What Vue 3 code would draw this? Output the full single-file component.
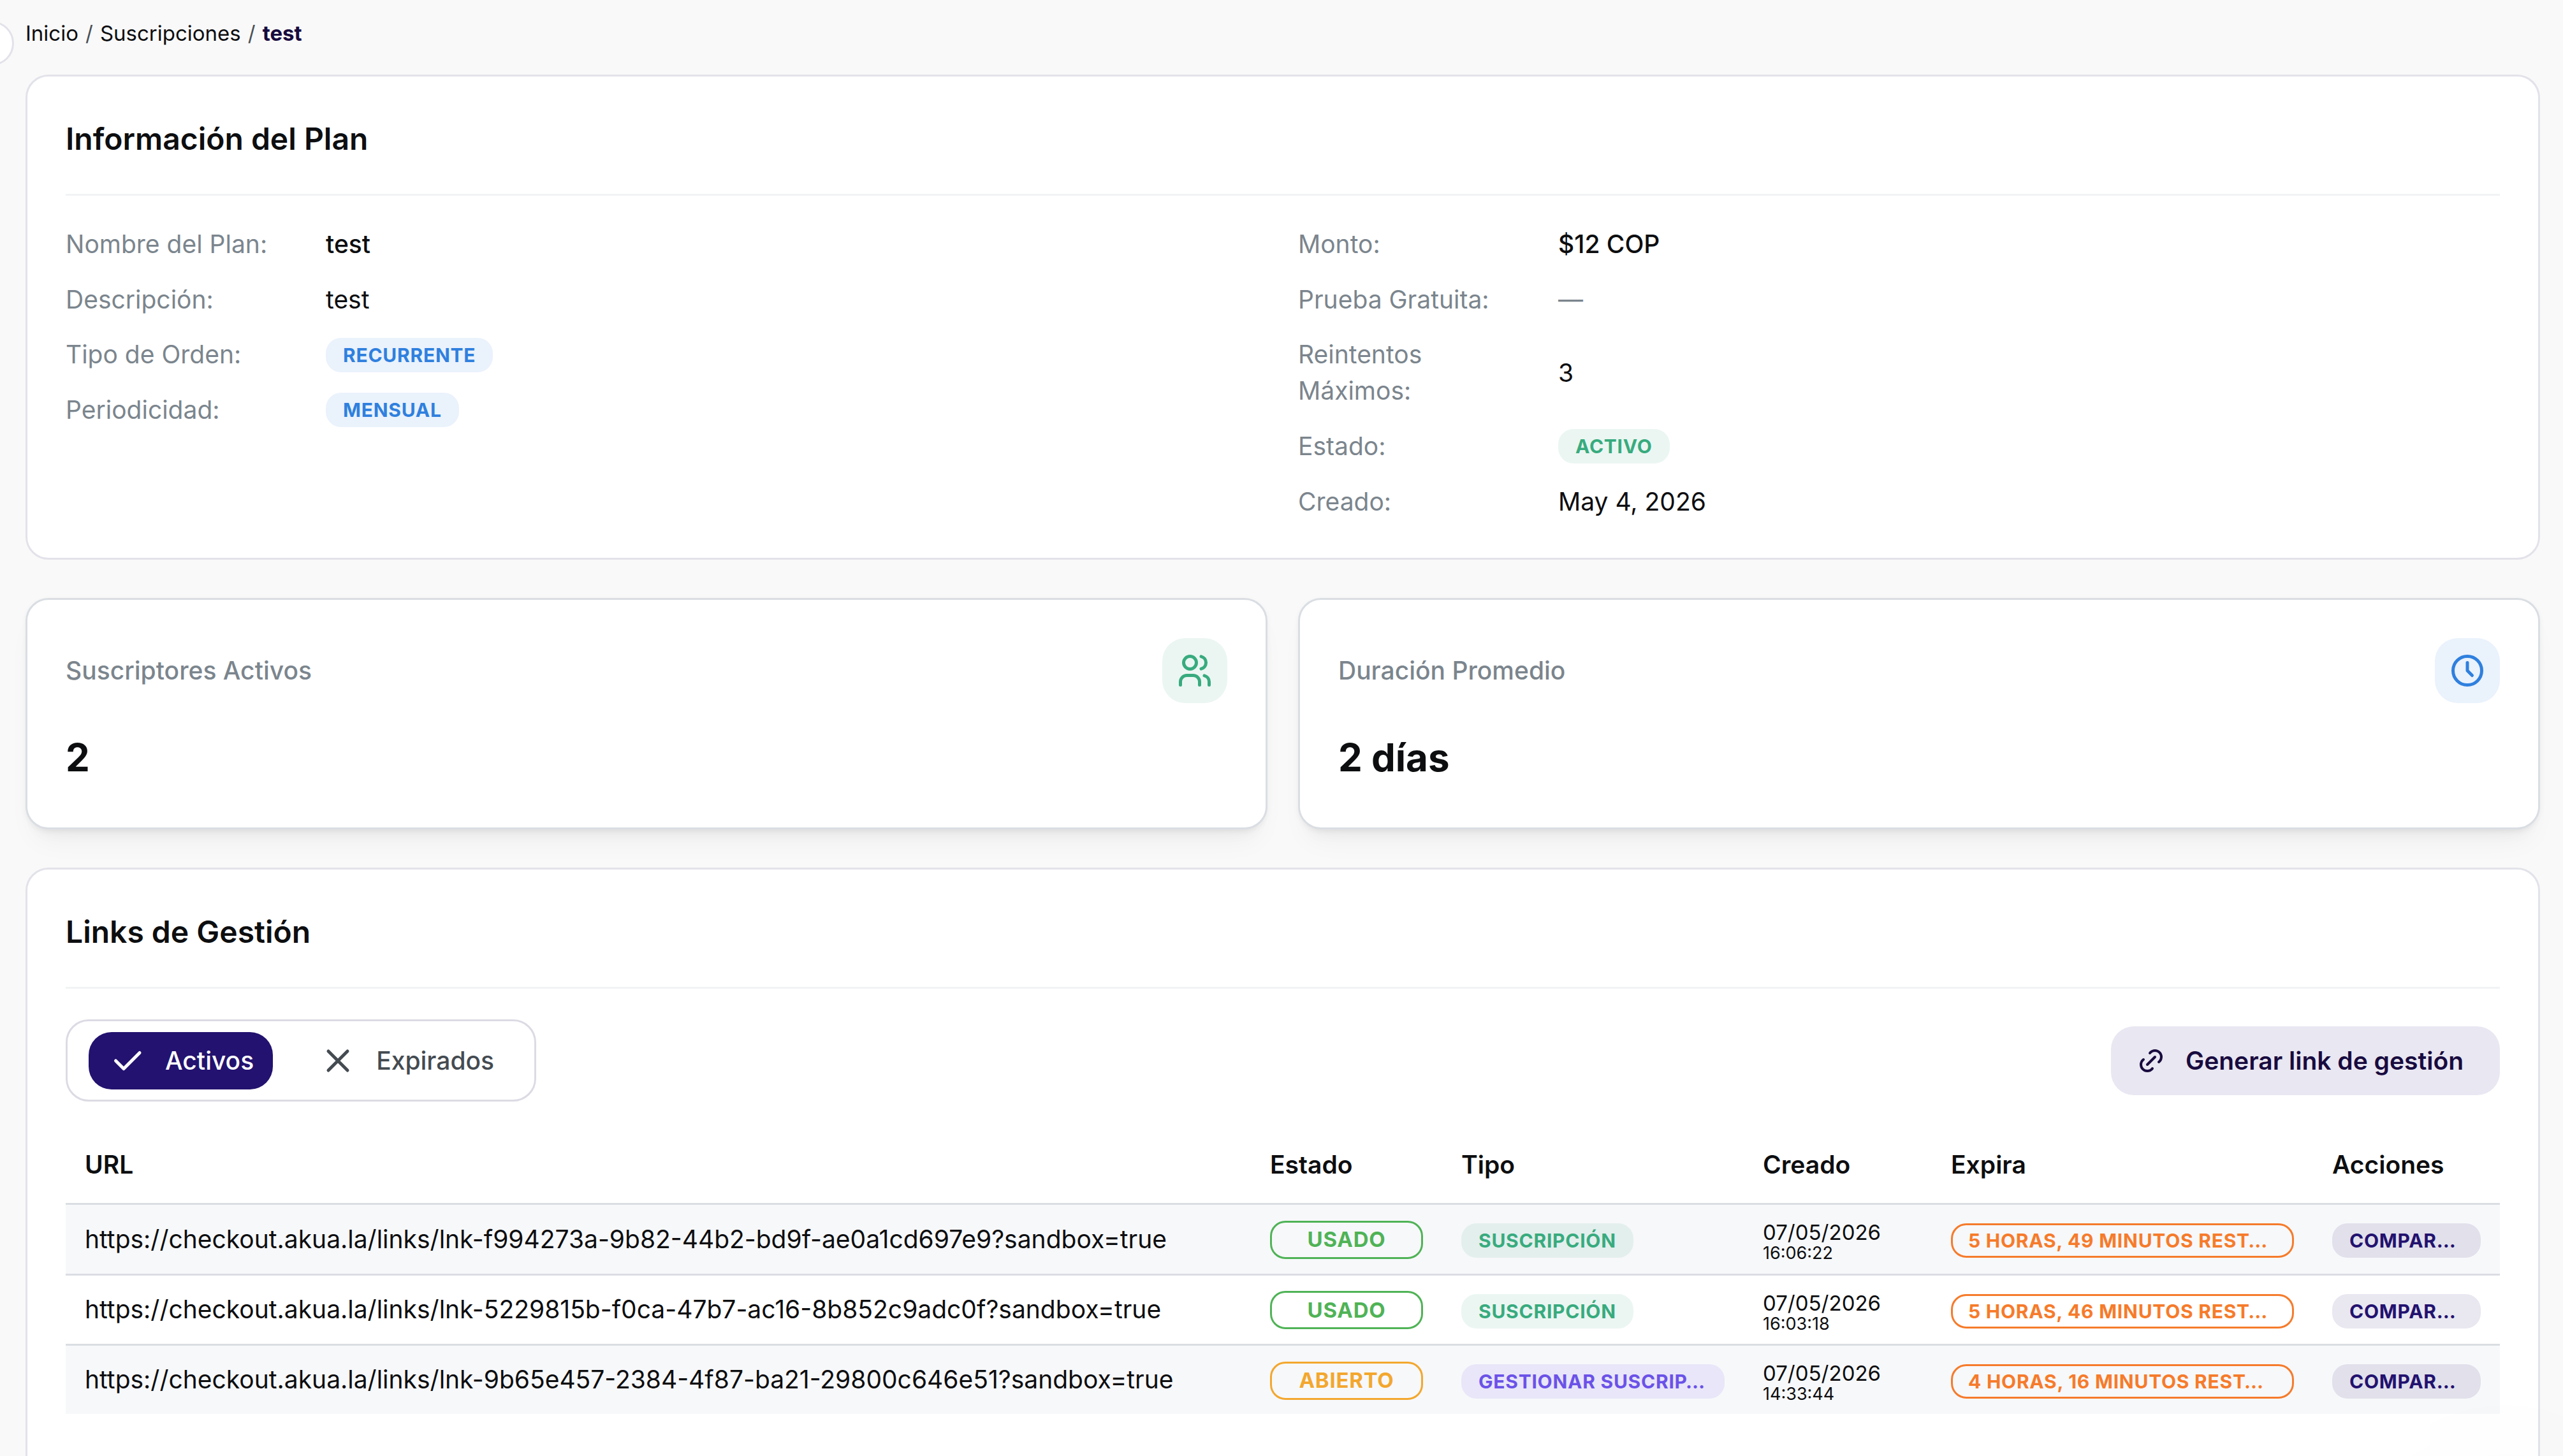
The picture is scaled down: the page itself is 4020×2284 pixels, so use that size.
<template>
  <div class="page">
    <div class="sidebar-toggle"></div>

    <nav class="breadcrumbs">
      <a class="crumb">Inicio</a>
      <span class="separator">/</span>
      <a class="crumb">Suscripciones</a>
      <span class="separator">/</span>
      <span class="crumb current">test</span>
    </nav>

    <!-- Información del plan -->
    <section class="card">
      <header class="card-header">
        <h2 class="card-title">Información del Plan</h2>
      </header>
      <div class="plan-grid">
        <div v-for="(column, i) in planColumns" :key="i" class="plan-column">
          <div v-for="row in column" :key="row.label" class="plan-row">
            <span class="plan-label">{{ row.label }}</span>
            <span v-if="row.badge" class="badge" :class="row.badge">{{ row.value }}</span>
            <span v-else class="plan-value" :class="row.style">{{ row.value }}</span>
          </div>
        </div>
      </div>
    </section>

    <!-- Métricas -->
    <div class="stats">
      <div v-for="stat in stats" :key="stat.label" class="stat-card">
        <div class="stat-top">
          <span class="stat-label">{{ stat.label }}</span>
          <span class="stat-icon" :class="stat.color">
            <svg viewBox="0 0 24 24" class="icon">
              <path v-for="d in stat.paths" :key="d" :d="d" />
            </svg>
          </span>
        </div>
        <div class="stat-value">{{ stat.value }}</div>
      </div>
    </div>

    <!-- Links de gestión -->
    <section class="card links-card">
      <header class="card-header">
        <h2 class="card-title">Links de Gestión</h2>
      </header>

      <div class="toolbar">
        <div class="tabs">
          <button
            v-for="tab in tabs"
            :key="tab.id"
            class="tab"
            :class="{ active: activeTab === tab.id }"
            @click="activeTab = tab.id"
          >
            <svg viewBox="0 0 24 24" class="icon">
              <path :d="tab.path" />
            </svg>
            {{ tab.label }}
          </button>
        </div>

        <button class="generate-button">
          <svg viewBox="0 0 24 24" class="icon">
            <path d="M9 15l6 -6" />
            <path d="M11 6l.463 -.536a5 5 0 0 1 7.071 7.072l-.534 .464" />
            <path d="M13 18l-.397 .534a5.068 5.068 0 0 1 -7.127 0a4.972 4.972 0 0 1 0 -7.071l.524 -.463" />
          </svg>
          Generar link de gestión
        </button>
      </div>

      <div class="table">
        <div class="table-row table-head">
          <span v-for="title in headers" :key="title" class="cell">{{ title }}</span>
        </div>
        <div v-for="link in links" :key="link.url" class="table-row table-body-row">
          <span class="cell url">{{ link.url }}</span>
          <span class="cell status-cell">
            <span class="badge outline status" :class="link.statusColor">{{ link.status }}</span>
          </span>
          <span class="cell badge-cell">
            <span class="badge" :class="link.typeColor">{{ link.type }}</span>
          </span>
          <span class="cell created">
            <span class="date">{{ link.date }}</span>
            <span class="time">{{ link.time }}</span>
          </span>
          <span class="cell badge-cell">
            <span class="badge outline orange expires">{{ link.expires }}</span>
          </span>
          <span class="cell badge-cell">
            <span class="badge indigo share">COMPAR…</span>
          </span>
        </div>
      </div>
    </section>

    <div class="floating-shadow"></div>
  </div>
</template>

<script setup>
import { ref } from 'vue'

const planColumns = [
  [
    { label: 'Nombre del Plan:', value: 'test', style: 'medium' },
    { label: 'Descripción:', value: 'test' },
    { label: 'Tipo de Orden:', value: 'RECURRENTE', badge: 'blue' },
    { label: 'Periodicidad:', value: 'MENSUAL', badge: 'blue' }
  ],
  [
    { label: 'Monto:', value: '$12 COP', style: 'medium' },
    { label: 'Prueba Gratuita:', value: '—', style: 'dimmed' },
    { label: 'Reintentos Máximos:', value: '3' },
    { label: 'Estado:', value: 'ACTIVO', badge: 'teal' },
    { label: 'Creado:', value: 'May 4, 2026' }
  ]
]

const stats = [
  {
    label: 'Suscriptores Activos',
    value: '2',
    color: 'teal',
    paths: [
      'M5 7a4 4 0 1 0 8 0a4 4 0 1 0 -8 0',
      'M3 21v-2a4 4 0 0 1 4 -4h4a4 4 0 0 1 4 4v2',
      'M16 3.13a4 4 0 0 1 0 7.75',
      'M21 21v-2a4 4 0 0 0 -3 -3.85'
    ]
  },
  {
    label: 'Duración Promedio',
    value: '2 días',
    color: 'blue',
    paths: ['M3 12a9 9 0 1 0 18 0a9 9 0 0 0 -18 0', 'M12 7v5l3 3']
  }
]

const activeTab = ref('activos')
const tabs = [
  { id: 'activos', label: 'Activos', path: 'M5 12l5 5l10 -10' },
  { id: 'expirados', label: 'Expirados', path: 'M18 6l-12 12M6 6l12 12' }
]

const headers = ['URL', 'Estado', 'Tipo', 'Creado', 'Expira', 'Acciones']

const links = [
  {
    url: 'https://checkout.akua.la/links/lnk-f994273a-9b82-44b2-bd9f-ae0a1cd697e9?sandbox=true',
    status: 'USADO',
    statusColor: 'green',
    type: 'SUSCRIPCIÓN',
    typeColor: 'teal',
    date: '07/05/2026',
    time: '16:06:22',
    expires: '5 HORAS, 49 MINUTOS REST…'
  },
  {
    url: 'https://checkout.akua.la/links/lnk-5229815b-f0ca-47b7-ac16-8b852c9adc0f?sandbox=true',
    status: 'USADO',
    statusColor: 'green',
    type: 'SUSCRIPCIÓN',
    typeColor: 'teal',
    date: '07/05/2026',
    time: '16:03:18',
    expires: '5 HORAS, 46 MINUTOS REST…'
  },
  {
    url: 'https://checkout.akua.la/links/lnk-9b65e457-2384-4f87-ba21-29800c646e51?sandbox=true',
    status: 'ABIERTO',
    statusColor: 'yellow',
    type: 'GESTIONAR SUSCRIP…',
    typeColor: 'violet',
    date: '07/05/2026',
    time: '14:33:44',
    expires: '4 HORAS, 16 MINUTOS REST…'
  }
]
</script>

<style>
body {
  background: #f9f9f9;
  overflow: hidden;
}
</style>

<style scoped>
.page {
  position: relative;
  box-sizing: border-box;
  width: 4020px;
  height: 2284px;
  padding: 0 36px 0 40px;
  overflow: hidden;
  background: #f9f9f9;
  font-family: Inter, sans-serif;
  font-size: 39px;
  line-height: 56.7px;
  color: #0d0e10;
}

.page *,
.page *::before {
  box-sizing: border-box;
}

button {
  font-family: inherit;
  border: none;
}

.icon {
  display: block;
  flex-shrink: 0;
  fill: none;
  stroke: currentColor;
  stroke-width: 2;
  stroke-linecap: round;
  stroke-linejoin: round;
}

.sidebar-toggle {
  position: absolute;
  left: -48px;
  top: 33px;
  width: 70px;
  height: 70px;
  border: 3px solid #e2e2ea;
  border-radius: 50%;
  background: #fff;
}

/* Migas de pan */
.breadcrumbs {
  display: flex;
  align-items: center;
  gap: 11px;
  height: 117px;
  padding-bottom: 13px;
  font-size: 33px;
}

.separator {
  color: #495057;
}

.current {
  font-weight: 700;
  color: #180b3f;
}

/* Tarjetas */
.card {
  padding: 60px;
  border: 3px solid #e2e2ea;
  border-radius: 36px;
  background: #fff;
}

.card-header {
  padding-bottom: 48px;
  margin-bottom: 48px;
  border-bottom: 3px solid #f1f3f5;
}

.card-title {
  margin: 0;
  font-size: 48px;
  font-weight: 600;
  line-height: 76px;
}

.plan-grid {
  display: grid;
  grid-template-columns: 1fr 1fr;
  gap: 48px;
}

.plan-column {
  display: flex;
  flex-direction: column;
  gap: 30px;
}

.plan-row {
  display: flex;
  align-items: center;
  gap: 48px;
}

.plan-label {
  width: 360px;
  color: #7b858d;
}

.medium {
  font-weight: 500;
}

.dimmed {
  color: #7b858d;
}

/* Badges */
.badge {
  display: inline-flex;
  align-items: center;
  height: 54px;
  padding: 0 24px;
  border: 3px solid transparent;
  border-radius: 24px;
  font-size: 30px;
  font-weight: 700;
  letter-spacing: 0.75px;
  line-height: 1;
  white-space: nowrap;
}

.blue {
  color: #2f80de;
  background-color: rgba(47, 128, 222, 0.1);
}

.teal {
  color: #38ab7e;
  background-color: rgba(56, 171, 126, 0.1);
}

.violet {
  width: 414px;
  color: #6b52e8;
  background-color: rgba(107, 82, 232, 0.1);
}

.indigo {
  color: #23126f;
  background-color: rgba(35, 18, 111, 0.1);
}

.badge.outline {
  border-color: currentColor;
  background-color: transparent;
}

.green {
  color: #4fb356;
}

.yellow {
  color: #f3a72e;
}

.orange {
  color: #f67b2b;
}

.status {
  justify-content: center;
  width: 240px;
  height: 60px;
  font-size: 33px;
}

.expires {
  width: 538px;
}

.share {
  width: 233px;
}

/* Métricas */
.stats {
  display: grid;
  grid-template-columns: 1fr 1fr;
  gap: 48px;
  margin: 60px 0;
}

.stat-card {
  height: 363px;
  padding: 60px;
  border: 3px solid #dadee3;
  border-radius: 36px;
  background: #fff;
  box-shadow:
    0 3px 9px rgba(0, 0, 0, 0.05),
    0 30px 45px -15px rgba(0, 0, 0, 0.05),
    0 21px 21px -15px rgba(0, 0, 0, 0.04);
}

.stat-top {
  display: flex;
  align-items: center;
  justify-content: space-between;
}

.stat-label {
  font-weight: 500;
  color: #7b858d;
}

.stat-icon {
  display: flex;
  align-items: center;
  justify-content: center;
  width: 102px;
  height: 102px;
  border-radius: 36px;
}

.stat-icon .icon {
  width: 60px;
  height: 60px;
}

.stat-value {
  margin-top: 48px;
  font-size: 60px;
  font-weight: 700;
  line-height: 75px;
}

/* Links */
.links-card {
  height: 1100px;
}

.toolbar {
  display: flex;
  align-items: center;
  justify-content: space-between;
}

.tabs {
  display: flex;
  align-items: center;
  gap: 42px;
  height: 129px;
  padding: 0 33px;
  border: 3px solid #dcdbe4;
  border-radius: 36px;
}

.tab {
  display: flex;
  align-items: center;
  gap: 30px;
  height: 90px;
  padding: 0 30px;
  border-radius: 36px;
  background: transparent;
  font-size: 39px;
  font-weight: 500;
  color: #444b51;
}

.tab.active {
  background: #23126f;
  color: #fff;
}

.tab .icon {
  width: 60px;
  height: 60px;
}

.generate-button {
  display: flex;
  align-items: center;
  gap: 30px;
  height: 108px;
  padding: 0 57px 0 39px;
  border-radius: 36px;
  background: #e9e7f1;
  font-size: 39px;
  font-weight: 600;
  color: #180b3f;
}

.generate-button .icon {
  width: 48px;
  height: 48px;
}

.table {
  margin-top: 39px;
}

.table-row {
  display: grid;
  grid-template-columns: 1859px 300px 473px 295px 598px 293px;
  align-items: center;
}

.cell {
  display: flex;
  align-items: center;
  padding: 0 30px;
}

.table-head {
  height: 123px;
  border-bottom: 3px solid #dadee3;
  font-weight: 600;
}

.table-body-row {
  height: 110.5px;
  border-bottom: 3px solid #dadee3;
}

.table-body-row:nth-child(even) {
  background: #f7f8fa;
}

.table-body-row:last-child {
  height: 107px;
  border-bottom: none;
}

.status-cell {
  padding-top: 2px;
}

.badge-cell {
  padding-top: 5px;
}

.created {
  flex-direction: column;
  align-items: flex-start;
  padding-top: 11px;
}

.date {
  font-size: 33px;
  line-height: 33px;
}

.time {
  font-size: 27px;
  line-height: 31.5px;
}

/* Sombra del botón flotante de la esquina */
.floating-shadow {
  position: absolute;
  right: -60px;
  bottom: -330px;
  width: 300px;
  height: 200px;
  border-radius: 100px;
  box-shadow: 0 0 360px 40px rgba(0, 0, 0, 0.14);
}
</style>
